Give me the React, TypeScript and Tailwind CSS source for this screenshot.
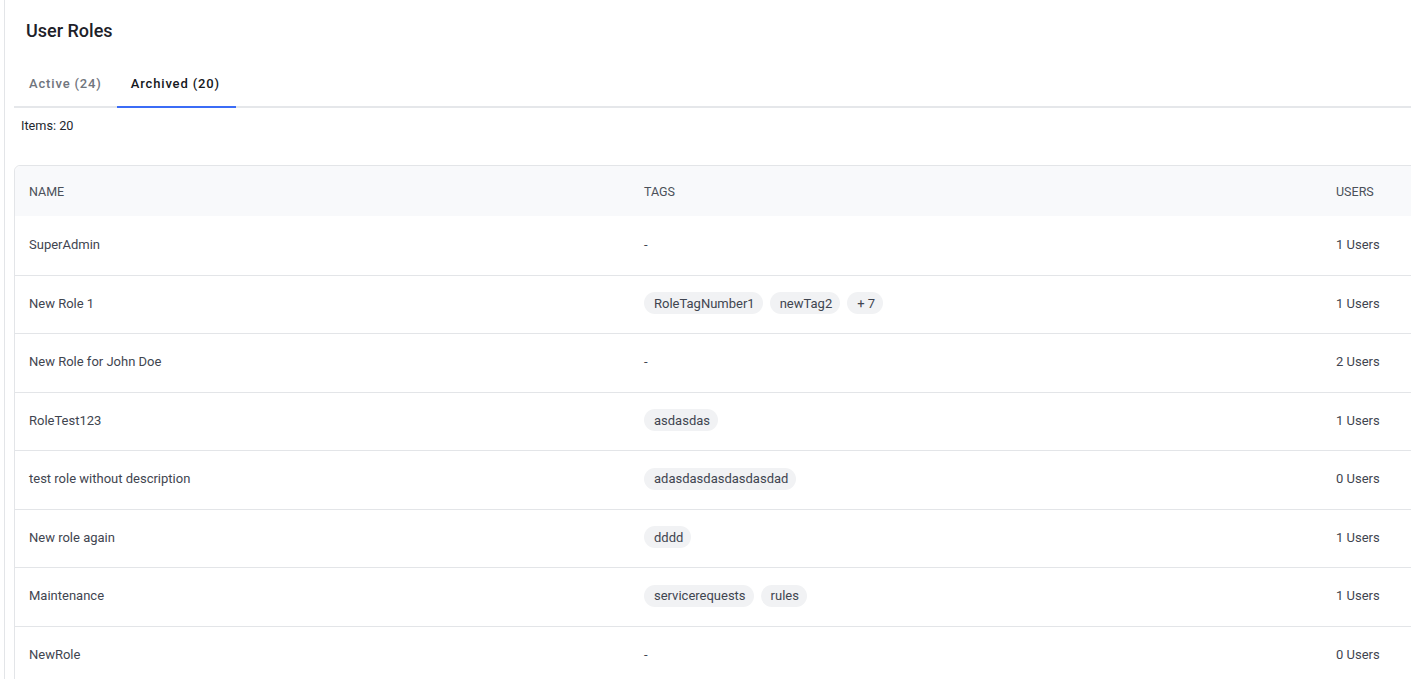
import React from 'react';

interface Role {
  name: string;
  tags: string[];
  extra?: number;
  users: number;
}

const roles: Role[] = [
  { name: 'SuperAdmin', tags: [], users: 1 },
  { name: 'New Role 1', tags: ['RoleTagNumber1', 'newTag2'], extra: 7, users: 1 },
  { name: 'New Role for John Doe', tags: [], users: 2 },
  { name: 'RoleTest123', tags: ['asdasdas'], users: 1 },
  { name: 'test role without description', tags: ['adasdasdasdasdasdad'], users: 0 },
  { name: 'New role again', tags: ['dddd'], users: 1 },
  { name: 'Maintenance', tags: ['servicerequests', 'rules'], users: 1 },
  { name: 'NewRole', tags: [], users: 0 },
];

const Tag: React.FC<{ label: string }> = ({ label }) => (
  <span className="inline-flex h-[22px] items-center rounded-full bg-[#f1f2f4] pl-[10px] pr-[8px] text-[13px] text-[#3f4550]">
    {label}
  </span>
);

const App: React.FC = () => {
  return (
    <div
      className="h-[679px] w-[1411px] overflow-hidden bg-white"
      style={{ fontFamily: 'Roboto, "Noto Sans", sans-serif' }}
    >
      <div className="ml-[4px] h-full border-l border-[#e3e5e8] pl-[9px]">
        <h1 className="pl-[12px] pt-[19px] text-[18px] font-medium leading-[24px] text-[#1d2129]">
          User Roles
        </h1>

        {/* tabs */}
        <div className="mt-[17px] flex border-b-2 border-[#e5e7ea]">
          <div className="-mb-[2px] flex h-[48px] items-center border-b-2 border-transparent px-[15px] pt-[2px] text-[13px] font-medium tracking-[0.065em] text-[#70757d]">
            Active (24)
          </div>
          <div className="-mb-[2px] flex h-[48px] items-center border-b-2 border-[#3b6cf6] pl-[14px] pr-[16px] pt-[2px] text-[13px] font-medium tracking-[0.065em] text-[#15181d]">
            Archived (20)
          </div>
        </div>

        <div className="pl-[7px] pt-[10px] text-[12.7px] leading-[16px] text-[#23272e]">Items: 20</div>

        {/* table */}
        <div className="mt-[31px] w-[1460px] rounded-tl-[6px] border border-[#e3e5e8]">
          <div className="grid h-[50px] grid-cols-[615px_692px_1fr] items-center rounded-tl-[6px] bg-[#f8f9fb] pt-[3px] text-[12.5px] text-[#4a5059]">
            <div className="pl-[14px]">NAME</div>
            <div className="pl-[14px]">TAGS</div>
            <div className="pl-[14px]">USERS</div>
          </div>
          {roles.map((role, i) => (
            <div
              key={role.name}
              className={`grid h-[58.5px] grid-cols-[615px_692px_1fr] items-center pb-[2px] text-[13px] text-[#3f4550] ${
                i === 0 ? '' : 'border-t border-[#e3e5e8]'
              }`}
            >
              <div className="pl-[14px]">{role.name}</div>
              <div className="flex items-center gap-[7px] pl-[14px]">
                {role.tags.length === 0 ? (
                  <span>-</span>
                ) : (
                  <>
                    {role.tags.map((t) => (
                      <Tag key={t} label={t} />
                    ))}
                    {role.extra ? <Tag label={`+ ${role.extra}`} /> : null}
                  </>
                )}
              </div>
              <div className="pl-[14px]">{role.users} Users</div>
            </div>
          ))}
        </div>
      </div>
    </div>
  );
};

export default App;
